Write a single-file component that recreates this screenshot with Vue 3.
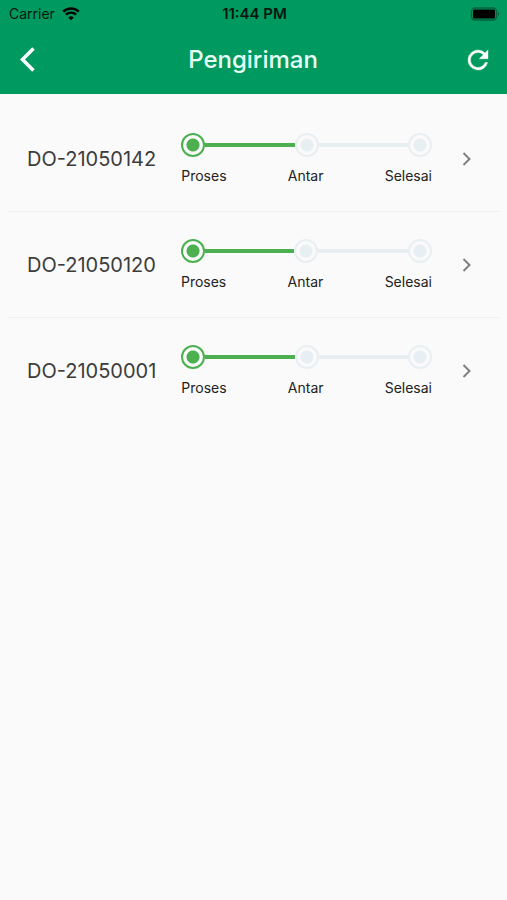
<script setup>
import { ref } from 'vue'

const steps = ['Proses', 'Antar', 'Selesai']

const orders = ref([
  { code: 'DO-21050142', step: 0 },
  { code: 'DO-21050120', step: 0 },
  { code: 'DO-21050001', step: 0 },
])
</script>

<template>
  <div class="page">
    <header class="header">
      <div class="status-bar">
        <div class="carrier">
          <span>Carrier</span>
          <svg class="wifi" viewBox="0 0 18 14" aria-hidden="true">
            <path d="M1.2 4.6a11.2 11.2 0 0 1 15.6 0" />
            <path d="M3.9 7.7a7.4 7.4 0 0 1 10.2 0" />
            <path class="fill" d="M9 13.2l-2.7-2.7a4 4 0 0 1 5.4 0z" />
          </svg>
        </div>
        <span class="time">11:44 PM</span>
        <svg class="battery" viewBox="0 0 30 14" aria-hidden="true">
          <rect class="shell" x="1.5" y="1" width="25" height="12" rx="3.5" />
          <rect x="3" y="2.5" width="22" height="9" rx="1.5" />
          <path class="tip" d="M28 5c1.6.5 1.6 3.5 0 4z" />
        </svg>
      </div>
      <div class="app-bar">
        <button class="icon-button" type="button" aria-label="Kembali">
          <svg viewBox="0 0 30 30">
            <path class="back" d="M20.5 3.5l-11 11 11 11" />
          </svg>
        </button>
        <h1>Pengiriman</h1>
        <button class="icon-button" type="button" aria-label="Muat ulang">
          <svg viewBox="0 0 24 24">
            <path
              class="refresh"
              d="M17.65 6.35A7.96 7.96 0 0 0 12 4a8 8 0 1 0 7.73 10h-2.08A6 6 0 1 1 12 6c1.66 0 3.14.69 4.22 1.78L13 11h7V4z"
            />
          </svg>
        </button>
      </div>
    </header>

    <main>
      <ul class="orders">
        <li v-for="order in orders" :key="order.code">
          <a class="order" href="#">
            <span class="code">{{ order.code }}</span>
            <div class="stepper">
              <div class="track">
                <template v-for="(name, i) in steps" :key="name">
                  <span v-if="i > 0" class="line" :class="{ active: i - 1 <= order.step }" />
                  <span class="dot" :class="{ active: i <= order.step }" />
                </template>
              </div>
              <div class="labels">
                <span v-for="name in steps" :key="name">{{ name }}</span>
              </div>
            </div>
            <svg class="chevron" viewBox="0 0 24 24" aria-hidden="true">
              <path d="M8.5 6l6 6-6 6" />
            </svg>
          </a>
        </li>
      </ul>
    </main>
  </div>
</template>

<style>
body {
  background: #fafafa;
}
</style>

<style scoped>
.page {
  min-height: 100vh;
  background: #fafafa;
  font-family: Inter, "Liberation Sans", sans-serif;
}

.header {
  background: #009a60;
}

.status-bar {
  display: grid;
  grid-template-columns: 1fr auto 1fr;
  align-items: center;
  height: 28px;
  padding: 0 7px 0 9px;
  font-size: 14px;
  line-height: 20px;
  color: #04160e;
}

.carrier {
  display: flex;
  align-items: center;
  gap: 7px;
}

.wifi {
  width: 18px;
  height: 14px;
  fill: none;
  stroke: #000;
  stroke-width: 2.4;
}

.wifi .fill {
  fill: #000;
  stroke: none;
}

.time {
  font-size: 15px;
  font-weight: 600;
}

.battery {
  justify-self: end;
  width: 30px;
  height: 14px;
}

.battery .shell {
  fill: none;
  stroke: #05613e;
  stroke-width: 1.5;
}

.battery .tip {
  fill: #05613e;
}

.app-bar {
  box-sizing: border-box;
  display: grid;
  grid-template-columns: 30px 1fr 30px;
  align-items: center;
  height: 66px;
  padding: 0 14px 2px 13px;
}

.app-bar h1 {
  margin: 0;
  font-size: 24px;
  font-weight: 500;
  line-height: 32px;
  text-align: center;
  color: #e8fff5;
}

.icon-button {
  width: 30px;
  height: 30px;
  padding: 0;
  border: 0;
  background: none;
  cursor: pointer;
}

.icon-button svg {
  display: block;
  width: 30px;
  height: 30px;
}

.back {
  fill: none;
  stroke: #fff;
  stroke-width: 3.5;
}

.refresh {
  fill: #fff;
  stroke: #fff;
  stroke-width: 0.3;
}

.orders {
  margin: 0;
  padding: 12px 7px 12px 8px;
  list-style: none;
}

.orders li + li {
  border-top: 1px solid #f0f0f0;
}

.order {
  display: flex;
  align-items: center;
  height: 105px;
  padding: 0 21px 0 19px;
  color: #222;
  text-decoration: none;
}

.code {
  margin-right: 25px;
  font-size: 20px;
  line-height: 28px;
  color: #3c3c3c;
}

.stepper {
  flex: 1;
}

.track {
  display: flex;
  align-items: center;
}

.dot {
  box-sizing: border-box;
  width: 24px;
  height: 24px;
  border: 2px solid #e8eff2;
  border-radius: 50%;
  background: radial-gradient(circle, #e8eff2 6px, transparent 7px);
}

.dot.active {
  border-color: #4caf50;
  background: radial-gradient(circle, #4caf50 6px, transparent 7px);
}

.line {
  flex: 1;
  height: 4px;
  background: #e8eff2;
}

.line.active {
  background: #4caf50;
}

.labels {
  display: flex;
  justify-content: space-between;
  margin-top: 10px;
  font-size: 14px;
  line-height: 18px;
}

.chevron {
  width: 24px;
  height: 24px;
  margin-left: 23px;
  fill: none;
  stroke: #808080;
  stroke-width: 2;
}
</style>
